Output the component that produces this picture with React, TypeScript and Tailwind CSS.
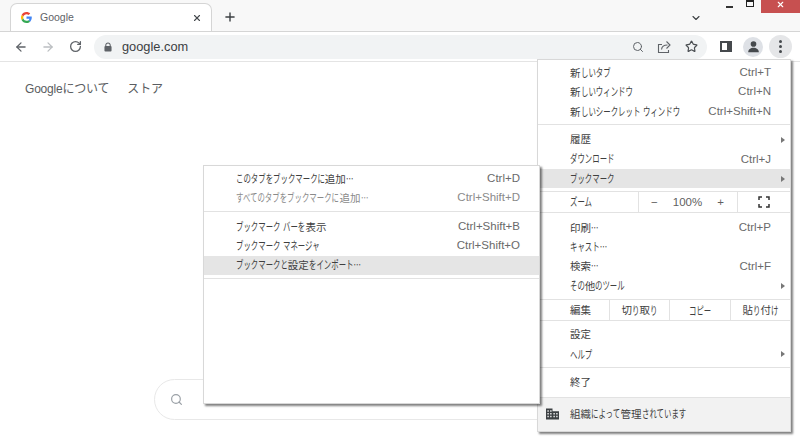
import React from 'react'
import { Search, Star, ArrowLeft, ArrowRight, RotateCw, X, Plus, ChevronDown } from 'lucide-react'

const font = "font-['Liberation_Sans','Noto_Sans_CJK_JP',sans-serif]"

// the screenshot's UI font has narrow kana, so squeeze kana runs and leave kanji alone
function Jp({ text }: { text: string }) {
  const parts = text.split(/([\u3040-\u30ff…]+)/)
  return (
    <>
      {parts.map((part, i) =>
        i % 2 === 1 ? (
          <span key={i} className="inline-block whitespace-nowrap" style={{ width: part.length * 7.4 }}>
            <span className="inline-block origin-left scale-x-[0.645] text-[11.5px] font-['Noto_Sans_CJK_JP',sans-serif]">{part}</span>
          </span>
        ) : (
          <span key={i}>{part}</span>
        ),
      )}
    </>
  )
}

function Row({ label, keys, arrow, active, dim }: { label: string; keys?: string; arrow?: boolean; active?: boolean; dim?: boolean }) {
  return (
    <div className={`flex items-center h-[19.4px] pl-[32px] pr-[19px] text-[10.5px] ${active ? 'bg-[#e5e5e5]' : ''} ${dim ? 'text-[#8a8a8a]' : 'text-[#3f3f3f]'}`}>
      <span className="flex-1 whitespace-nowrap"><Jp text={label} /></span>
      {keys && <span className={`text-[11.5px] ${dim ? 'text-[#8a8a8a]' : 'text-[#6a6a6a]'}`}>{keys}</span>}
      {arrow && <span className="w-0 h-0 -mr-[14px] border-y-[3px] border-y-transparent border-l-[4px] border-l-[#777]" />}
    </div>
  )
}

function Sep({ className }: { className: string }) {
  return <div className={`h-px bg-[#e2e2e2] ${className}`} />
}

function GoogleG() {
  return (
    <svg viewBox="0 0 48 48" className="w-[11px] h-[11px] shrink-0">
      <path fill="#EA4335" d="M24 9.5c3.5 0 6.7 1.2 9.2 3.6l6.9-6.9C35.900 2.400 30.500 0 24 0 14.600 0 6.500 5.400 2.600 13.200l8 6.200C12.500 13.700 17.800 9.500 24 9.500z" />
      <path fill="#4285F4" d="M47 24.500c0-1.600-.1-3.100-.4-4.500H24v9h12.900c-.6 3-2.200 5.500-4.700 7.200l7.700 6C44.400 37.900 47 31.800 47 24.500z" />
      <path fill="#FBBC05" d="M10.600 28.600A14.400 14.400 0 0 1 9.800 24c0-1.600.3-3.200.8-4.600l-8-6.200A24 24 0 0 0 0 24c0 3.900.9 7.500 2.600 10.800l8-6.200z" />
      <path fill="#34A853" d="M24 48c6.500 0 11.900-2.100 15.900-5.800l-7.700-6c-2.200 1.400-4.900 2.300-8.200 2.300-6.200 0-11.500-4.200-13.400-9.900l-8 6.200C6.500 42.600 14.600 48 24 48z" />
    </svg>
  )
}

export default function App() {
  return (
    <div lang="ja" className={`relative w-[800px] h-[438px] overflow-hidden bg-white ${font}`}>
      {/* tab strip */}
      <div className="flex h-[31px] bg-[#f8f8f8] pl-[10px] pt-[3px]">
        <div className="flex items-center w-[202px] h-[28px] bg-white border border-b-0 border-[#d5d5d5] rounded-t-[7px] pl-[10px] pr-[9px]">
          <GoogleG />
          <span className="ml-[8px] flex-1 text-[10.5px] text-[#5f6368]">Google</span>
          <X className="w-[10px] h-[10px] text-[#45494d]" strokeWidth={2.6} />
        </div>
        <Plus className="w-[14px] h-[14px] ml-[11px] mt-[7px] text-[#3c4043]" strokeWidth={2.4} />
        <div className="flex-1" />
        <ChevronDown className="w-[12px] h-[12px] mt-[9px] mr-[98px] text-[#3c4043]" strokeWidth={2.2} />
      </div>

      {/* window buttons */}
      <div className="absolute right-0 top-0 flex items-start">
        <div className="w-[7px] h-[2px] mt-[6px] bg-[#333]" />
        <div className="w-[8px] h-[7px] ml-[13px] border border-t-[2px] border-[#222]" />
        <div className="flex justify-center w-[39px] h-[13px] ml-[7px] bg-[#c75050]">
          <X className="w-[9px] h-[9px] text-white" strokeWidth={3} />
        </div>
      </div>

      {/* toolbar */}
      <div className="flex items-center h-[31px] bg-white border-b border-[#e4e4e4] border-t border-t-[#d5d5d5] pl-[14px]">
        <ArrowLeft className="w-[14px] h-[14px] text-[#5f6368]" strokeWidth={2.2} />
        <ArrowRight className="w-[14px] h-[14px] ml-[13px] text-[#bcbfc2]" strokeWidth={2.2} />
        <RotateCw className="w-[13px] h-[13px] ml-[14px] text-[#5f6368]" strokeWidth={2.4} />
        <div className="flex items-center w-[613px] h-[24px] ml-[12px] rounded-full bg-[#f1f3f4] pl-[10px] pr-[9px]">
          <svg viewBox="0 0 9 11" className="w-[8px] h-[10px] shrink-0">
            <path d="M2 5V3.500a2.500 2.500 0 0 1 5 0V5" fill="none" stroke="#5f6368" strokeWidth="1.200" />
            <rect x="0.500" y="4.500" width="8" height="6" rx="1" fill="#5f6368" />
          </svg>
          <span className="ml-[10px] flex-1 text-[12.800px] text-[#3c4043]">google.com</span>
          <Search className="w-[12px] h-[12px] text-[#5f6368]" strokeWidth={2} />
          <svg viewBox="0 0 14 14" className="w-[14px] h-[14px] ml-[13px]" fill="none" stroke="#5f6368" strokeWidth="1.100">
            <path d="M5 4.500H1.500v8h10V10" />
            <path d="M4.500 9.500c.3-2.800 2.500-4.500 6-4.500" />
            <path d="M9.500 1.500l3.500 3.500-3.500 3.500" />
          </svg>
          <Star className="w-[13px] h-[13px] ml-[14px] text-[#4a4e52]" strokeWidth={2.2} />
        </div>
        <div className="w-[12px] h-[11px] ml-[13px] border-2 border-r-[5px] border-[#45494d]" />
        <div className="flex items-center justify-center w-[20px] h-[20px] ml-[11px] rounded-full bg-[#dee1e6]">
          <svg viewBox="0 0 24 24" className="w-[15px] h-[15px]" fill="#45494d">
            <circle cx="12" cy="8" r="4.500" />
            <path d="M3.500 21c0-4.500 4-7 8.500-7s8.500 2.500 8.500 7z" />
          </svg>
        </div>
        <div className="flex flex-col items-center justify-center gap-[2px] w-[23px] h-[23px] ml-[6px] rounded-full bg-[#e5e6e8]">
          <span className="w-[3px] h-[3px] rounded-full bg-[#45494d]" />
          <span className="w-[3px] h-[3px] rounded-full bg-[#45494d]" />
          <span className="w-[3px] h-[3px] rounded-full bg-[#45494d]" />
        </div>
      </div>

      {/* page */}
      <div className="flex gap-[18px] pl-[25px] pt-[18px] text-[12px] tracking-[-0.2px] text-[#5a5d61]">
        <span>Googleについて</span>
        <span>ストア</span>
      </div>

      {/* search box behind menus */}
      <div className="absolute left-[154px] top-[379px] flex items-center w-[500px] h-[41px] rounded-full border border-[#e8e8e8] pl-[15px]">
        <Search className="w-[13px] h-[13px] text-[#9aa0a6]" strokeWidth={2.2} />
      </div>

      {/* main menu */}
      <div className="absolute left-[537px] top-[59px] w-[254px] bg-white border border-[#d8d8d8] shadow-[2px_2px_2px_rgba(0,0,0,0.5)] pt-[3px]">
        <Row label="新しいタブ" keys="Ctrl+T" />
        <Row label="新しいウィンドウ" keys="Ctrl+N" />
        <Row label="新しいシークレット ウィンドウ" keys="Ctrl+Shift+N" />
        <Sep className="mt-[3px] mb-[5px]" />
        <Row label="履歴" arrow />
        <Row label="ダウンロード" keys="Ctrl+J" />
        <Row label="ブックマーク" arrow active />
        <Sep className="mt-[3px]" />
        <div className="flex items-center h-[20px] text-[10.5px] text-[#3f3f3f]">
          <span className="w-[100px] pl-[32px]"><Jp text="ズーム" /></span>
          <div className="flex items-center justify-between w-[100px] h-full pl-[12px] pr-[13px] border-x border-[#e2e2e2] text-[#5f5f5f] text-[11.500px]">
            <span>−</span>
            <span>100%</span>
            <span>+</span>
          </div>
          <div className="flex flex-1 items-center justify-center">
            <svg viewBox="0 0 12 12" className="w-[12px] h-[12px]" fill="none" stroke="#333" strokeWidth="1.500">
              <path d="M1 4V1h3M8 1h3v3M11 8v3H8M4 11H1V8" />
            </svg>
          </div>
        </div>
        <Sep className="mb-[4.5px]" />
        <Row label="印刷…" keys="Ctrl+P" />
        <Row label="キャスト…" />
        <Row label="検索…" keys="Ctrl+F" />
        <Row label="その他のツール" arrow />
        <Sep className="mt-[4px]" />
        <div className="flex items-stretch h-[20px] text-[10.5px] text-[#3f3f3f]">
          <span className="flex items-center w-[71px] pl-[32px]"><Jp text="編集" /></span>
          <span className="flex items-center justify-center w-[60px] border-l border-[#e2e2e2]"><Jp text="切り取り" /></span>
          <span className="flex items-center justify-center w-[61px] border-l border-[#e2e2e2]"><Jp text="コピー" /></span>
          <span className="flex flex-1 items-center justify-center border-l border-[#e2e2e2]"><Jp text="貼り付け" /></span>
        </div>
        <Sep className="mb-[4px]" />
        <Row label="設定" />
        <Row label="ヘルプ" arrow />
        <Sep className="mt-[3px] mb-[5px]" />
        <Row label="終了" />
        <div className="flex items-center h-[34.5px] mt-[4px] bg-[#f2f2f2] border-t border-[#e2e2e2] pl-[8px] text-[10.5px] text-[#3f3f3f]">
          <svg viewBox="0 0 14 12" className="w-[13px] h-[12px]" fill="#3c4043">
            <path d="M0 0h7v3h7v9H0zM1.500 2v1.500H3V2zm3 0v1.500H6V2zm-3 3v1.500H3V5zm3 0v1.500H6V5zm-3 3v1.500H3V8zm3 0v1.500H6V8zM8 5v1.500h1.500V5zm3 0v1.500h1.500V5zM8 8v1.500h1.500V8zm3 0v1.500h1.500V8z" fillRule="evenodd" />
          </svg>
          <span className="ml-[11px]"><Jp text="組織によって管理されています" /></span>
        </div>
      </div>

      {/* bookmark submenu */}
      <div className="absolute left-[203px] top-[165px] w-[337px] h-[239px] bg-white border border-[#d8d8d8] shadow-[2px_2px_2px_rgba(0,0,0,0.5)] pt-[3px]">
        <Row label="このタブをブックマークに追加…" keys="Ctrl+D" />
        <Row label="すべてのタブをブックマークに追加…" keys="Ctrl+Shift+D" dim />
        <Sep className="mt-[3px] mb-[5px]" />
        <Row label="ブックマーク バーを表示" keys="Ctrl+Shift+B" />
        <Row label="ブックマーク マネージャ" keys="Ctrl+Shift+O" />
        <Row label="ブックマークと設定をインポート…" active />
        <Sep className="mt-[3px]" />
      </div>
    </div>
  )
}
